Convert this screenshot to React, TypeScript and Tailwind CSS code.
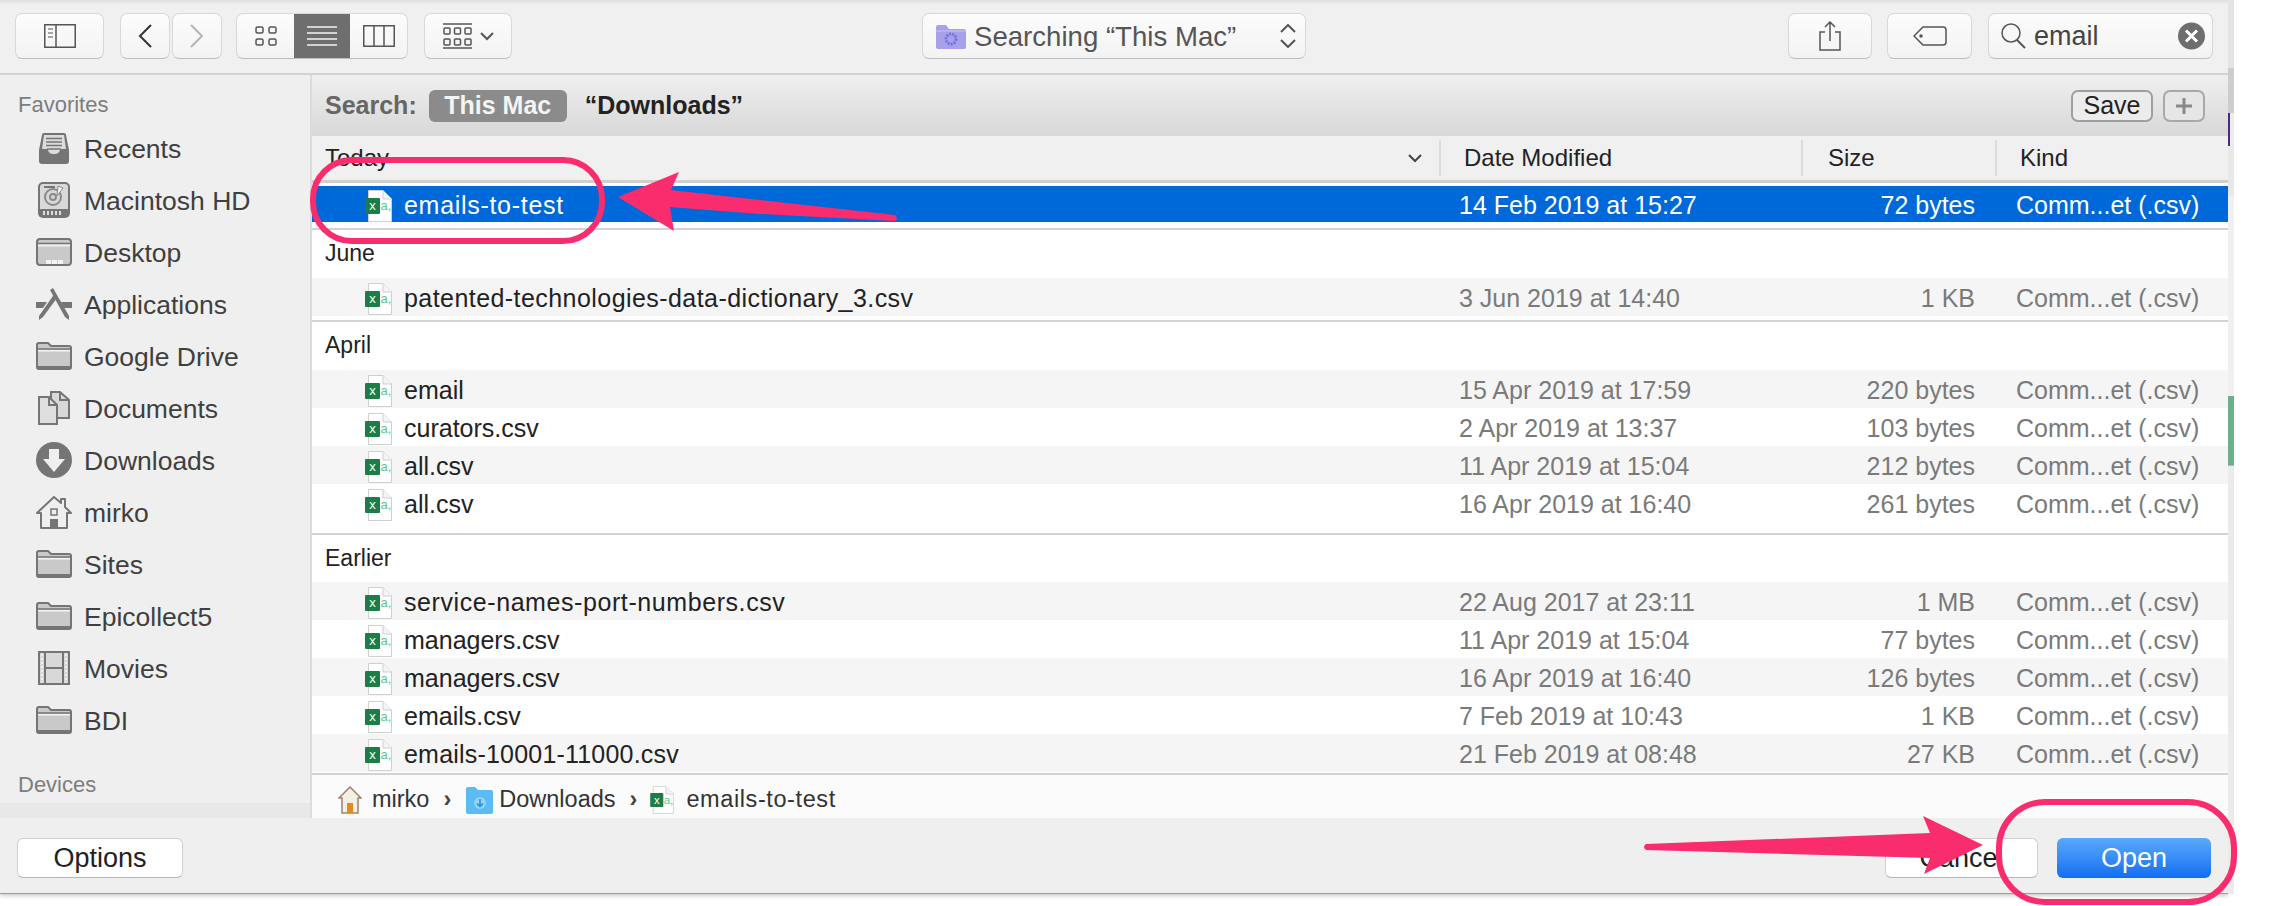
import React from "react";

const ICON_DARK = "#757575";
const ICON_FILL = "#c9c9c9";

const XlsIcon: React.FC<{ small?: boolean }> = ({ small = false }) => (
  <svg
    viewBox="0 0 27 32"
    className={small ? "w-[24px] h-[28px] shrink-0" : "w-[27px] h-[32px] shrink-0"}
  >
    <path d="M3.5 .5H18L26.5 9V31.5H3.5Z" fill="#fff" stroke="#cfcfcf" />
    <path d="M18 .5V9H26.5" fill="#f4f4f4" stroke="#cfcfcf" />
    <rect x="0" y="8" width="15" height="16" rx="1" fill="#1d7d46" />
    <text x="7.5" y="20" textAnchor="middle" fontSize="13" fill="#fff" fontFamily="Liberation Sans">
      x
    </text>
    <text x="15.500" y="20" fontSize="13" fill="#5cc98c" fontFamily="Liberation Sans">
      a,
    </text>
  </svg>
);

const Folder = () => (
  <svg viewBox="0 0 36 28" className="w-[36px] h-[28px]">
    <path d="M1 25V3a2 2 0 0 1 2-2h9l3 3h18a2 2 0 0 1 2 2v19a2 2 0 0 1-2 2H3a2 2 0 0 1-2-2Z" fill={ICON_FILL} stroke={ICON_DARK} strokeWidth="2" />
    <path d="M1 7H35" stroke={ICON_DARK} strokeWidth="1.5" />
    <path d="M2 8H34V9.5H2Z" fill="#f2f2f2" />
    <path d="M2 24H34V26.5H2Z" fill={ICON_DARK} />
  </svg>
);

const SidebarIcon: React.FC<{ name: string }> = ({ name }) => {
  switch (name) {
    case "recents":
      return (
        <svg viewBox="0 0 32 32" className="w-[32px] h-[32px]">
          <path d="M4 3a2 2 0 0 1 2-2h20a2 2 0 0 1 2 2l3 15v11a3 3 0 0 1-3 3H4a3 3 0 0 1-3-3V18Z" fill={ICON_DARK} />
          <path d="M6 3H26L28 17H22C22 21 19 22 16 22S10 21 10 17H4Z" fill="#dcdcdc" />
          <path d="M8 6.500H24M8 10H24M8 13.500H24M9 17H23" stroke={ICON_DARK} strokeWidth="1.600" />
        </svg>
      );
    case "hd":
      return (
        <svg viewBox="0 0 32 36" className="w-[32px] h-[36px]">
          <rect x="1" y="1" width="30" height="34" rx="4" fill="#d8d8d8" stroke={ICON_DARK} strokeWidth="2" />
          <rect x="6" y="4" width="11" height="2" fill={ICON_DARK} />
          <circle cx="15" cy="15" r="8" fill="none" stroke="#8a8a8a" strokeWidth="2" />
          <circle cx="15" cy="15" r="3" fill="none" stroke="#8a8a8a" strokeWidth="2" />
          <path d="M20 4 25 6 19 14Z" fill="#f2f2f2" stroke="#8a8a8a" />
          <rect x="1" y="27" width="30" height="8" rx="2" fill={ICON_DARK} />
          <path d="M6 29V33M10 29V33M14 29V33M18 29V33M22 29V33" stroke="#ddd" strokeWidth="2" />
        </svg>
      );
    case "desktop":
      return (
        <svg viewBox="0 0 36 28" className="w-[36px] h-[28px]">
          <rect x="1" y="1" width="34" height="26" rx="3" fill={ICON_FILL} stroke={ICON_DARK} strokeWidth="2" />
          <path d="M1 5.500H35" stroke={ICON_DARK} strokeWidth="1.500" />
          <path d="M2 6.500H34V8.500H2Z" fill="#efefef" />
          <path d="M10 22H15V26H10ZM16 22H21V26H16ZM22 22H27V26H22Z" fill="#f2f2f2" />
        </svg>
      );
    case "apps":
      return (
        <svg viewBox="0 0 36 32" className="w-[36px] h-[32px]">
          <path d="M14 2 17 0 33 28 33 32 29 29Z" fill={ICON_DARK} />
          <path d="M19 5 21 10 7 29 3 32 3 28Z" fill={ICON_DARK} />
          <path d="M0 14H11L7 20H0ZM25 14H36V20H28Z" fill={ICON_DARK} />
        </svg>
      );
    case "docs":
      return (
        <svg viewBox="0 0 32 34" className="w-[32px] h-[34px]">
          <path d="M13 1H22L31 9V27H13Z" fill="#d8d8d8" stroke={ICON_DARK} strokeWidth="2" />
          <path d="M22 1V9H31" fill="none" stroke={ICON_DARK} strokeWidth="2" />
          <path d="M1 6H11L19 14V33H1Z" fill="#dedede" stroke={ICON_DARK} strokeWidth="2" />
          <path d="M11 6V14H19" fill="none" stroke={ICON_DARK} strokeWidth="2" />
        </svg>
      );
    case "download":
      return (
        <svg viewBox="0 0 36 36" className="w-[36px] h-[36px]">
          <circle cx="18" cy="18" r="18" fill={ICON_DARK} />
          <path d="M13 7H23V17H29L18 30 7 17H13Z" fill="#efefef" />
        </svg>
      );
    case "home":
      return (
        <svg viewBox="0 0 36 33" className="w-[36px] h-[33px]">
          <path d="M18 1 25 7V3H29V11L35 17H31V32H5V17H1Z" fill="#efefef" stroke={ICON_DARK} strokeWidth="2" strokeLinejoin="round" />
          <rect x="15" y="13" width="6" height="6" fill="none" stroke={ICON_DARK} strokeWidth="1.5" />
          <rect x="14" y="23" width="8" height="9" fill={ICON_DARK} />
        </svg>
      );
    case "movies":
      return (
        <svg viewBox="0 0 32 34" className="w-[32px] h-[34px]">
          <rect x="1" y="1" width="30" height="32" fill="#d8d8d8" stroke={ICON_DARK} strokeWidth="2" />
          <path d="M7 1V33M25 1V33M7 17H25" stroke={ICON_DARK} strokeWidth="2" />
          <path d="M4 3V32M28 3V32" stroke="#efefef" strokeWidth="2" strokeDasharray="2 2" />
        </svg>
      );
    default:
      return <Folder />;
  }
};

const favorites = [
  { label: "Recents", icon: "recents" },
  { label: "Macintosh HD", icon: "hd" },
  { label: "Desktop", icon: "desktop" },
  { label: "Applications", icon: "apps" },
  { label: "Google Drive", icon: "folder" },
  { label: "Documents", icon: "docs" },
  { label: "Downloads", icon: "download" },
  { label: "mirko", icon: "home" },
  { label: "Sites", icon: "folder" },
  { label: "Epicollect5", icon: "folder" },
  { label: "Movies", icon: "movies" },
  { label: "BDI", icon: "folder" },
];

const KIND = "Comm...et (.csv)";

interface FileRow {
  name: string;
  date: string;
  size: string;
  // hyphens run wider in the original system font
  track?: string;
}

interface Group {
  title: string;
  pad: string;
  head: string;
  rows: FileRow[];
}

const groups: Group[] = [
  {
    title: "June",
    pad: "pb-[4px]",
    head: "h-[48px]",
    rows: [
      {
        name: "patented-technologies-data-dictionary_3.csv",
        date: "3 Jun 2019 at 14:40",
        size: "1 KB",
        track: "tracking-[0.44px]",
      },
    ],
  },
  {
    title: "April",
    pad: "pb-[11px]",
    head: "h-[48px]",
    rows: [
      { name: "email", date: "15 Apr 2019 at 17:59", size: "220 bytes" },
      { name: "curators.csv", date: "2 Apr 2019 at 13:37", size: "103 bytes" },
      { name: "all.csv", date: "11 Apr 2019 at 15:04", size: "212 bytes" },
      { name: "all.csv", date: "16 Apr 2019 at 16:40", size: "261 bytes" },
    ],
  },
  {
    title: "Earlier",
    pad: "",
    head: "h-[47px]",
    rows: [
      { name: "service-names-port-numbers.csv", date: "22 Aug 2017 at 23:11", size: "1 MB", track: "tracking-[0.58px]" },
      { name: "managers.csv", date: "11 Apr 2019 at 15:04", size: "77 bytes" },
      { name: "managers.csv", date: "16 Apr 2019 at 16:40", size: "126 bytes" },
      { name: "emails.csv", date: "7 Feb 2019 at 10:43", size: "1 KB" },
      { name: "emails-10001-11000.csv", date: "21 Feb 2019 at 08:48", size: "27 KB", track: "tracking-[0.2px]" },
    ],
  },
];

const ToolButton: React.FC<{ className?: string; children: React.ReactNode }> = ({ className = "", children }) => (
  <div
    className={`h-[46px] flex items-center justify-center rounded-[7px] border border-[#d8d8d8] border-b-[#bdbdbd] bg-gradient-to-b from-[#fcfcfc] to-[#f3f3f3] ${className}`}
  >
    {children}
  </div>
);

const Toolbar = () => (
  <div className="h-[75px] shrink-0 flex items-start pt-[13px] pl-[15px] border-b-[2px] border-[#d2d2d2] bg-gradient-to-b from-[#dfdfdf] from-0% via-[#f0f0f0] via-[7%] to-[#f0f0f0]">
    <ToolButton className="w-[89px]">
      <svg viewBox="0 0 32 24" className="w-[32px] h-[24px]" fill="none" stroke="#555" strokeWidth="1.5">
        <rect x=".75" y=".75" width="30.5" height="22.5" />
        <path d="M12 1V23" />
        <path d="M4 5H9M4 9H9M4 13H9" strokeWidth="1.2" />
      </svg>
    </ToolButton>
    <ToolButton className="w-[50px] ml-[16px]">
      <svg viewBox="0 0 14 24" className="w-[14px] h-[24px]" fill="none" stroke="#333" strokeWidth="2">
        <path d="M13 1 2 12 13 23" />
      </svg>
    </ToolButton>
    <ToolButton className="w-[50px] ml-[2px]">
      <svg viewBox="0 0 14 24" className="w-[14px] h-[24px]" fill="none" stroke="#b5b5b5" strokeWidth="2">
        <path d="M1 1 12 12 1 23" />
      </svg>
    </ToolButton>
    <div className="w-[172px] h-[46px] ml-[14px] flex rounded-[7px] border border-[#d8d8d8] border-b-[#bdbdbd] bg-gradient-to-b from-[#fcfcfc] to-[#f3f3f3] overflow-hidden">
      <div className="w-[57px] flex items-center justify-center">
        <svg viewBox="0 0 22 20" className="w-[22px] h-[20px]" fill="none" stroke="#555" strokeWidth="1.5">
          <rect x="1" y="1" width="7" height="6" rx="1.5" />
          <rect x="14" y="1" width="7" height="6" rx="1.5" />
          <rect x="1" y="13" width="7" height="6" rx="1.5" />
          <rect x="14" y="13" width="7" height="6" rx="1.5" />
        </svg>
      </div>
      <div className="w-[56px] flex items-center justify-center bg-[#6e6e6e]">
        <svg viewBox="0 0 30 20" className="w-[30px] h-[20px]" fill="none" stroke="#f4f4f4" strokeWidth="1.6">
          <path d="M0 1H30M0 7H30M0 13H30M0 19H30" />
        </svg>
      </div>
      <div className="flex-1 flex items-center justify-center">
        <svg viewBox="0 0 32 22" className="w-[32px] h-[22px]" fill="none" stroke="#555" strokeWidth="1.5">
          <rect x=".75" y=".75" width="30.5" height="20.5" />
          <path d="M11 1V21M21 1V21" />
        </svg>
      </div>
    </div>
    <ToolButton className="w-[88px] ml-[16px] gap-[8px]">
      <svg viewBox="0 0 29 26" className="w-[29px] h-[26px]" fill="none" stroke="#555" strokeWidth="1.5">
        <path d="M0 1H29M0 25H29" />
        <rect x="1" y="5" width="6" height="6" rx="1" />
        <rect x="11.5" y="5" width="6" height="6" rx="1" />
        <rect x="22" y="5" width="6" height="6" rx="1" />
        <rect x="1" y="16" width="6" height="6" rx="1" />
        <rect x="11.5" y="16" width="6" height="6" rx="1" />
        <rect x="22" y="16" width="6" height="6" rx="1" />
      </svg>
      <svg viewBox="0 0 14 9" className="w-[14px] h-[9px]" fill="none" stroke="#555" strokeWidth="2">
        <path d="M1 1 7 7 13 1" />
      </svg>
    </ToolButton>

    <ToolButton className="w-[384px] ml-[410px] justify-start pl-[13px]">
      <svg viewBox="0 0 30 25" className="w-[30px] h-[25px] shrink-0">
        <path d="M0 3a2 2 0 0 1 2-2h8l3 4h15a2 2 0 0 1 2 2v16a2 2 0 0 1-2 2H2a2 2 0 0 1-2-2Z" fill="#a7a1ec" />
        <path d="M0 7H30" stroke="#c6c2f5" />
        <circle cx="15" cy="15" r="5" fill="none" stroke="#7a72d8" strokeWidth="3" strokeDasharray="2 1" />
      </svg>
      <span className="ml-[8px] pt-[1px] text-[27.6px] text-[#555] whitespace-nowrap">Searching “This Mac”</span>
      <svg viewBox="0 0 16 24" className="w-[16px] h-[24px] ml-auto mr-[9px]" fill="none" stroke="#555" strokeWidth="2">
        <path d="M1 8 8 1 15 8M1 16 8 23 15 16" />
      </svg>
    </ToolButton>

    <ToolButton className="w-[84px] ml-[482px]">
      <svg viewBox="0 0 22 30" className="w-[22px] h-[30px]" fill="none" stroke="#555" strokeWidth="1.5">
        <path d="M6 11H1V29H21V11H16M11 20V1M6 6 11 1 16 6" />
      </svg>
    </ToolButton>
    <ToolButton className="w-[85px] ml-[15px]">
      <svg viewBox="0 0 34 20" className="w-[34px] h-[20px]" fill="none" stroke="#555" strokeWidth="1.5">
        <path d="M10 1H30a3 3 0 0 1 3 3V16a3 3 0 0 1-3 3H10L1 10Z" />
        <circle cx="8" cy="10" r="1" fill="#555" />
      </svg>
    </ToolButton>
    <ToolButton className="w-[225px] ml-[16px] justify-start pl-[11px]">
      <svg viewBox="0 0 26 26" className="w-[26px] h-[26px] shrink-0" fill="none" stroke="#555" strokeWidth="1.5">
        <ellipse cx="11" cy="10" rx="9" ry="9" />
        <path d="M17 17 25 25" strokeWidth="2" />
      </svg>
      <span className="ml-[8px] pt-[1px] text-[27px] text-[#444]">email</span>
      <svg viewBox="0 0 27 28" className="w-[27px] h-[28px] ml-auto mr-[7px]">
        <circle cx="13.5" cy="14" r="13.5" fill="#6e6e6e" />
        <path d="M8 8.5 19 19.5M19 8.5 8 19.5" stroke="#fff" strokeWidth="3" />
      </svg>
    </ToolButton>
  </div>
);

const Sidebar = () => (
  <div className="w-[312px] shrink-0 flex flex-col bg-[#efefef] border-r-[2px] border-[#dcdcdc] overflow-hidden">
    <div className="h-[45px] mb-[2px] pl-[18px] flex items-end text-[22px] leading-[30px] text-[#7d7d7d] font-medium">
      Favorites
    </div>
    {favorites.map((item) => (
      <div key={item.label} className="h-[52px] shrink-0 flex items-center">
        <div className="w-[36px] ml-[36px] flex justify-center">
          <SidebarIcon name={item.icon} />
        </div>
        <span className="ml-[12px] pt-[3px] text-[26.5px] text-[#3f3f3f] whitespace-nowrap">{item.label}</span>
      </div>
    ))}
    <div className="h-[57px] shrink-0 pl-[18px] flex items-end pb-[3px] text-[22px] leading-[30px] text-[#7d7d7d] font-medium">
      Devices
    </div>
    <div className="flex-1 bg-[#e8e8e8]" />
  </div>
);

const RowCells: React.FC<{ row: FileRow; selected?: boolean }> = ({ row, selected = false }) => (
  <>
    <div className="w-[1129px] shrink-0 flex items-center pl-[53px]">
      <XlsIcon />
      <span className={`ml-[12px] ${row.track ?? ""} ${selected ? "text-white" : "text-[#222]"}`}>{row.name}</span>
    </div>
    <div className={`w-[320px] shrink-0 pl-[18px] ${selected ? "text-white" : "text-[#7a7a7a]"}`}>{row.date}</div>
    <div className={`w-[214px] shrink-0 text-right ${selected ? "text-white" : "text-[#7a7a7a]"}`}>{row.size}</div>
    <div className={`ml-[41px] ${selected ? "text-white" : "text-[#7a7a7a]"}`}>{KIND}</div>
  </>
);

const SearchBar = () => (
  <div className="h-[61px] shrink-0 flex items-center pl-[13px] pr-[23px] bg-gradient-to-b from-[#efefef] to-[#d8d8d8]">
    <span className="text-[25px] font-bold text-[#666]">Search:</span>
    <span className="ml-[12px] w-[138px] h-[32px] flex items-center justify-center rounded-[6px] bg-[#8b8b8b] text-[25px] font-bold text-[#f4f4f4]">
      This Mac
    </span>
    <span className="ml-[18px] text-[25px] font-bold text-[#222]">“Downloads”</span>
    <span className="ml-auto w-[82px] h-[32px] flex items-center justify-center rounded-[7px] border-[2px] border-[#9f9f9f] bg-[#ececec] text-[25px] text-[#222]">
      Save
    </span>
    <span className="ml-[10px] w-[42px] h-[32px] flex items-center justify-center rounded-[7px] border-[2px] border-[#a8a8a8] bg-[#e6e6e6]">
      <svg viewBox="0 0 16 16" className="w-[16px] h-[16px]" stroke="#8a8a8a" strokeWidth="3">
        <path d="M8 0V16M0 8H16" />
      </svg>
    </span>
  </div>
);

const ColumnHeader = () => (
  <div className="h-[47px] shrink-0 flex items-center bg-[#f0f0f0] border-b-[3px] border-[#cfcfcf] text-[24px] text-[#222]">
    <div className="w-[1129px] shrink-0 h-[36px] flex items-center pl-[13px] pr-[17px] border-r-[2px] border-[#dcdcdc]">
      <span>Today</span>
      <svg viewBox="0 0 14 9" className="w-[14px] h-[9px] ml-auto" fill="none" stroke="#444" strokeWidth="2">
        <path d="M1 1 7 7 13 1" />
      </svg>
    </div>
    <div className="w-[362px] shrink-0 h-[36px] flex items-center pl-[23px] border-r-[2px] border-[#dcdcdc]">Date Modified</div>
    <div className="w-[194px] shrink-0 h-[36px] flex items-center pl-[25px] border-r-[2px] border-[#dcdcdc]">Size</div>
    <div className="pl-[23px]">Kind</div>
  </div>
);

const FileList = () => (
  <div className="flex-1 flex flex-col bg-white text-[25px] min-h-0">
    <div className="pt-[3px] pb-[6px] border-b-[2px] border-[#d2d2d2]">
      <div className="h-[36px] pt-[4px] flex items-center bg-[#0069d9]">
        <RowCells
          row={{ name: "emails-to-test", date: "14 Feb 2019 at 15:27", size: "72 bytes", track: "tracking-[0.7px]" }}
          selected
        />
      </div>
    </div>
    {groups.map((group) => (
      <div
        key={group.title}
        className={`${group.pad} ${group.title === "Earlier" ? "" : "border-b-[2px] border-[#d2d2d2]"}`}
      >
        <div className={`${group.head} pb-[1px] flex items-center pl-[13px] text-[23px] text-[#222]`}>{group.title}</div>
        {group.rows.map((row, i) => (
          <div
            key={row.name + row.date}
            className={`h-[38px] pt-[3px] flex items-center ${i % 2 === 0 ? "bg-[#f5f5f5]" : "bg-white"}`}
          >
            <RowCells row={row} />
          </div>
        ))}
      </div>
    ))}
  </div>
);

const PathBar = () => (
  <div className="h-[45px] shrink-0 flex items-center pl-[26px] pt-[6px] border-t-[2px] border-[#d2d2d2] bg-[#fbfbfb] text-[23.5px] text-[#333]">
    <svg viewBox="0 0 24 28" className="w-[24px] h-[28px]">
      <path d="M12 1 23 12H20V27H4V12H1Z" fill="#f4efe6" stroke="#a0826a" strokeWidth="1.5" />
      <rect x="9" y="17" width="6" height="10" fill="#e58a1f" />
    </svg>
    <span className="ml-[10px]">mirko</span>
    <span className="ml-[14px] text-[#444] font-bold">›</span>
    <svg viewBox="0 0 27 28" className="w-[27px] h-[28px] ml-[15px]">
      <path d="M0 3a2 2 0 0 1 2-2h7l3 3h13a2 2 0 0 1 2 2v20a2 2 0 0 1-2 2H2a2 2 0 0 1-2-2Z" fill="#5bbcf3" />
      <circle cx="14" cy="17" r="6" fill="#8fd3f8" />
      <path d="M14 13V20M11 17.5 14 20.5 17 17.5" stroke="#2b8fd0" strokeWidth="1.5" fill="none" />
    </svg>
    <span className="ml-[6px]">Downloads</span>
    <span className="ml-[14px] text-[#444] font-bold">›</span>
    <div className="ml-[13px]">
      <XlsIcon small />
    </div>
    <span className="ml-[12px] tracking-[0.6px]">emails-to-test</span>
  </div>
);

const BottomBar = () => (
  <div className="h-[76px] shrink-0 flex items-center pl-[17px] pr-[17px] pt-[5px] bg-[#efefef] border-b border-[#9a9a9a] text-[27px] text-[#222]">
    <div className="w-[166px] h-[40px] flex items-center justify-center rounded-[6px] bg-white border border-[#d0d0d0] border-b-[#b5b5b5]">
      Options
    </div>
    <div className="ml-auto w-[153px] h-[40px] flex items-center justify-center rounded-[6px] bg-white border border-[#d0d0d0] border-b-[#b5b5b5]">
      Cancel
    </div>
    <div className="ml-[19px] w-[154px] h-[40px] flex items-center justify-center rounded-[6px] bg-gradient-to-b from-[#5aa9fb] to-[#0f6ef0] text-white">
      Open
    </div>
  </div>
);

// sliver of whatever sat behind the dialog
const BackdropStrip = () => (
  <div className="w-[6px] h-[894px] shrink-0 flex flex-col bg-[#ececec]">
    <div className="h-[68px] bg-[#e4e4e4]" />
    <div className="h-[45px] bg-[#cdcdcd]" />
    <div className="h-[33px] bg-[#4b2a7f] mr-[4px]" />
    <div className="h-[50px] bg-[#e8e8e8]" />
    <div className="h-[200px] bg-[#f0f0f0]" />
    <div className="h-[69px] bg-[#6fae8a]" />
    <div className="h-[1px] bg-[#b5b5b5]" />
    <div className="flex-1 bg-[#ebebeb]" />
  </div>
);

// annotations drawn on top of the screenshot
const Annotations = () => (
  <svg viewBox="0 0 2278 906" className="absolute inset-0 w-[2278px] h-[906px] pointer-events-none">
    <rect x="313" y="160" width="289" height="81" rx="39" fill="none" stroke="#f92d6e" strokeWidth="6" />
    <path d="M618 197 679 172 671 190 760 200 895 215Q899 219 895 221L760 214 670 207 674 231Z" fill="#f92d6e" />
    <path d="M1646 844 1930 833 1923 816 1983 845 1924 874 1930 858 1646 850Q1642 847 1646 844Z" fill="#f92d6e" />
    <rect x="1999" y="802" width="235" height="100" rx="46" fill="none" stroke="#f92d6e" strokeWidth="6" />
  </svg>
);

export default function App() {
  return (
    <div className="relative w-[2278px] h-[906px] overflow-hidden flex items-start bg-white font-['Liberation_Sans',Arial,sans-serif]">
      <div className="w-[2228px] h-[894px] shrink-0 flex flex-col bg-[#f0f0f0] shadow-[0_2px_4px_rgba(0,0,0,0.2)]">
        <Toolbar />
        <div className="flex-1 flex min-h-0">
          <Sidebar />
          <div className="flex-1 flex flex-col min-w-0">
            <SearchBar />
            <ColumnHeader />
            <FileList />
            <PathBar />
          </div>
        </div>
        <BottomBar />
      </div>
      <BackdropStrip />
      <Annotations />
    </div>
  );
}
